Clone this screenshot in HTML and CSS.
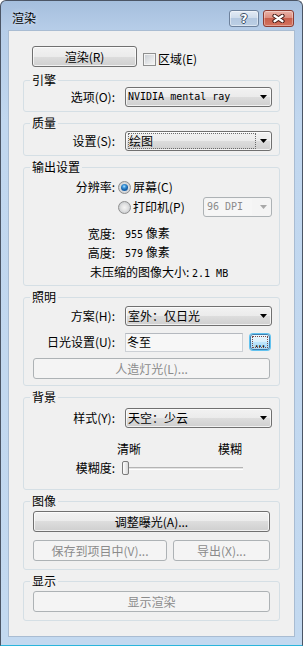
FILE: index.html
```html
<!DOCTYPE html>
<html lang="zh-CN">
<head>
<meta charset="utf-8">
<title>渲染</title>
<link rel="stylesheet" href="styles.css">
</head>
<body>
<div class="window">
  <div class="titlebar">
    <span class="title">渲染</span>
    <div class="caps">
      <span class="cap cap-help">?</span>
      <span class="cap cap-close"><svg width="13" height="9" viewBox="0 0 13 9"><path d="M2.5 1.8 L10.5 7.2 M10.5 1.8 L2.5 7.2" stroke="#3d1510" stroke-width="4.2" stroke-linecap="round"/><path d="M2.5 1.8 L10.5 7.2 M10.5 1.8 L2.5 7.2" stroke="#fff" stroke-width="2.4" stroke-linecap="round"/></svg></span>
    </div>
  </div>
  <div class="client">
    <div class="render-row">
      <span class="btn btn-render">渲染(R)</span>
      <span class="checkbox"></span>
      <span class="check-label">区域(E)</span>
    </div>

    <fieldset class="group g-engine">
      <legend>引擎</legend>
      <div class="row">
        <span class="lbl">选项(O):</span>
        <span class="combo"><span class="mono">NVIDIA mental ray</span><svg class="arrow" width="7" height="4" viewBox="0 0 7 4"><path d="M0 0H7L3.5 4Z" fill="#000"/></svg></span>
      </div>
    </fieldset>

    <fieldset class="group g-quality">
      <legend>质量</legend>
      <div class="row">
        <span class="lbl">设置(S):</span>
        <span class="combo"><span class="focus-text">绘图</span><svg class="arrow" width="7" height="4" viewBox="0 0 7 4"><path d="M0 0H7L3.5 4Z" fill="#000"/></svg></span>
      </div>
    </fieldset>

    <fieldset class="group g-output">
      <legend>输出设置</legend>
      <div class="row">
        <span class="lbl">分辨率:</span>
        <span class="radio-cell"><span class="radio checked"></span><span>屏幕(C)</span></span>
      </div>
      <div class="row">
        <span></span>
        <span class="radio-cell"><span class="radio"></span><span>打印机(P)</span>
          <span class="combo combo-disabled dpi"><span class="dpi-text mono">96 DPI</span><svg class="arrow" width="7" height="4" viewBox="0 0 7 4"><path d="M0 0H7L3.5 4Z" fill="#a8a8a8"/></svg></span>
        </span>
      </div>
      <div class="row info first-info">
        <span class="lbl">宽度:</span>
        <span><span class="mono">955</span> 像素</span>
      </div>
      <div class="row info">
        <span class="lbl">高度:</span>
        <span><span class="mono">579</span> 像素</span>
      </div>
      <div class="uncompressed">未压缩的图像大小: <span class="mono">2.1 MB</span></div>
    </fieldset>

    <fieldset class="group g-light">
      <legend>照明</legend>
      <div class="row">
        <span class="lbl">方案(H):</span>
        <span class="combo"><span>室外：仅日光</span><svg class="arrow" width="7" height="4" viewBox="0 0 7 4"><path d="M0 0H7L3.5 4Z" fill="#000"/></svg></span>
      </div>
      <div class="row sun-row">
        <span class="lbl">日光设置(U):</span>
        <span class="sun-cell"><span class="textbox">冬至</span><span class="btn btn-dots"><span class="dots">...</span></span></span>
      </div>
      <span class="btn btn-wide btn-disabled btn-artificial">人造灯光(L)...</span>
    </fieldset>

    <fieldset class="group g-bg">
      <legend>背景</legend>
      <div class="row">
        <span class="lbl">样式(Y):</span>
        <span class="combo"><span>天空：少云</span><svg class="arrow" width="7" height="4" viewBox="0 0 7 4"><path d="M0 0H7L3.5 4Z" fill="#000"/></svg></span>
      </div>
      <div class="row scale-row">
        <span></span>
        <span class="scale"><span>清晰</span><span>模糊</span></span>
      </div>
      <div class="row slider-row">
        <span class="lbl">模糊度:</span>
        <span class="slider"><span class="track"></span><span class="thumb"></span></span>
      </div>
    </fieldset>

    <fieldset class="group g-image">
      <legend>图像</legend>
      <span class="btn btn-wide">调整曝光(A)...</span>
      <div class="btn-pair">
        <span class="btn btn-disabled btn-save">保存到项目中(V)...</span>
        <span class="btn btn-disabled btn-export">导出(X)...</span>
      </div>
    </fieldset>

    <fieldset class="group g-display">
      <legend>显示</legend>
      <span class="btn btn-wide btn-disabled">显示渲染</span>
    </fieldset>
  </div>
</div>
</body>
</html>
```

FILE: styles.css
```css
* {
  box-sizing: border-box;
}

body {
  margin: 0;
  background: #ffffff;
}

.window {
  width: 303px;
  height: 646px;
  border: 1px solid #4b5565;
  border-bottom: 1px solid #2ab5dc;
  border-radius: 6px 6px 0 0;
  background: linear-gradient(#a5bfdd 0px, #b6cde8 28px, #c1d7ef 120px, #c3d9f0 100%);
  display: flex;
  flex-direction: column;
  font-family: "Noto Sans CJK SC", sans-serif;
  font-size: 12px;
  line-height: 14px;
  color: #000000;
}

.titlebar {
  height: 29px;
  flex: none;
  display: flex;
  align-items: flex-start;
  padding: 9px 8px 0 11px;
}

.title {
  margin-top: 1px;
  text-shadow: 0 0 5px rgba(255, 255, 255, 0.8);
}

.caps {
  margin-left: auto;
  display: flex;
  gap: 4px;
}

.cap {
  width: 30px;
  height: 17px;
  border-radius: 3px;
  display: flex;
  align-items: center;
  justify-content: center;
}

.cap-help {
  border: 1px solid #6d819c;
  background: linear-gradient(#e3ebf5 0%, #cfdcec 45%, #b4c8e0 50%, #bccfe5 100%);
  box-shadow: inset 0 0 0 1px rgba(255, 255, 255, 0.45);
  color: #ffffff;
  font-family: "DejaVu Sans", sans-serif;
  font-weight: bold;
  font-size: 12px;
  line-height: 14px;
  text-shadow: 1px 0 0 #3b4d66, -1px 0 0 #3b4d66, 0 1px 0 #3b4d66, 0 -1px 0 #3b4d66;
}

.cap-close {
  width: 31px;
  border: 1px solid #8c3b31;
  background: linear-gradient(#eab3a8 0%, #dd8e7f 45%, #c85f4c 50%, #d4735e 100%);
  box-shadow: inset 0 0 0 1px rgba(255, 255, 255, 0.35);
}

.client {
  flex: 1;
  margin: 0 7px 8px;
  background: #f0f0f0;
  border: 1px solid #a9bcd2;
  padding: 15px 14px 0;
}

.render-row {
  display: flex;
  align-items: flex-start;
  padding-left: 9px;
}

.btn {
  display: flex;
  align-items: center;
  justify-content: center;
  height: 21px;
  border: 1px solid #707070;
  border-radius: 3px;
  background: linear-gradient(#f2f2f2 0%, #ebebeb 50%, #dddddd 50%, #cfcfcf 100%);
  box-shadow: inset 0 0 0 1px rgba(255, 255, 255, 0.7);
  white-space: nowrap;
}

.btn-render {
  width: 105px;
}

.checkbox {
  width: 13px;
  height: 13px;
  margin: 7px 0 0 6px;
  border: 1px solid #8e8f8f;
  background: linear-gradient(135deg, #c6cbd1 0%, #e6e8ea 60%, #f6f6f6 100%);
  box-shadow: inset 0 0 0 1px #f4f4f4;
}

.check-label {
  margin: 6px 0 0 2px;
}

.group {
  margin: 6px 0 0;
  padding: 0 7px 4px 9px;
  border: 1px solid #d5dfe5;
  border-radius: 3px;
  min-width: 0;
}

.group + .group {
  margin-top: 4px;
}

.group legend {
  padding: 0 2px;
  margin-left: -3px;
  line-height: 14px;
}

.row {
  display: grid;
  grid-template-columns: 82px 147px;
  column-gap: 10px;
  align-items: center;
}

.lbl {
  text-align: right;
  white-space: nowrap;
}

.mono {
  font-family: "DejaVu Sans Mono", monospace;
  font-size: 10px;
}

.combo {
  display: flex;
  align-items: center;
  height: 20px;
  border: 1px solid #707070;
  border-radius: 3px;
  background: linear-gradient(#f2f2f2 0%, #ebebeb 50%, #dddddd 50%, #cfcfcf 100%);
  box-shadow: inset 0 0 0 1px rgba(255, 255, 255, 0.7);
  padding: 0 4px 0 2px;
  white-space: nowrap;
}

.combo .arrow {
  margin-left: auto;
  flex: none;
}

.focus-text {
  flex: 1;
  height: 16px;
  margin-right: 4px;
  border: 1px dotted #6b6b6b;
  display: flex;
  align-items: center;
}

.combo-disabled {
  border-color: #adb2b5;
  background: #f4f4f4;
  box-shadow: none;
  color: #8b8b8b;
}

.g-engine {
  padding-top: 0;
}

.g-quality {
  padding-top: 1px;
}

.g-output {
  padding-top: 3px;
}

.radio-cell {
  display: flex;
  align-items: center;
  height: 20px;
  margin-left: -7px;
  white-space: nowrap;
}

.radio {
  width: 13px;
  height: 13px;
  margin-right: 2px;
  border-radius: 50%;
  border: 1px solid #8f8f8f;
  background: radial-gradient(circle at 50% 50%, #f4f4f4 0, #e4e4e4 3px, #c9ccd0 6px);
  display: flex;
  align-items: center;
  justify-content: center;
  flex: none;
}

.radio.checked::after {
  content: "";
  width: 7px;
  height: 7px;
  border-radius: 50%;
  background: radial-gradient(circle at 45% 35%, #b9e4fb 0, #3e97db 1.6px, #175fa6 3.5px);
}

.dpi {
  margin-left: auto;
  width: 69px;
  height: 20px;
  padding-left: 2px;
}

.dpi-text {
  width: 46px;
  height: 16px;
  display: flex;
  align-items: center;
  padding-left: 1px;
  background: #f6f6f6;
}

.info {
  height: 19px;
}

.first-info {
  margin-top: 7px;
}

.uncompressed {
  height: 19px;
  line-height: 19px;
  padding-left: 57px;
  white-space: nowrap;
}

.g-light {
  padding-top: 2px;
  padding-bottom: 6px;
}

.sun-row {
  height: 20px;
  margin-top: 6px;
}

.sun-cell {
  display: flex;
  align-items: center;
  gap: 7px;
  margin-right: 2px;
}

.textbox {
  flex: 1;
  height: 19px;
  display: flex;
  align-items: center;
  padding-left: 1px;
  border: 1px solid #ccd0d5;
  border-top-color: #b5b9bf;
  background: #f7f7f7;
}

.btn-dots {
  width: 20px;
  height: 16px;
  border-color: #3c7fb1;
  background: linear-gradient(#eaf6fd 0%, #d9f0fc 50%, #bee6fd 50%, #a7d9f5 100%);
  box-shadow: 0 0 0 1px #62c2ef;
  align-items: flex-end;
  padding: 1px;
}

.dots {
  width: 100%;
  height: 12px;
  border: 1px dotted #7a4a4a;
  display: flex;
  justify-content: center;
  align-items: flex-end;
  line-height: 10px;
}

.btn-wide {
  width: 237px;
}

.btn-disabled {
  border-color: #adb2b5;
  background: #f4f4f4;
  box-shadow: none;
  color: #8b8b8b;
}

.btn-artificial {
  margin-top: 6px;
}

.g-bg {
  padding-top: 4px;
  padding-bottom: 13px;
}

.scale-row {
  height: 14px;
  margin-top: 14px;
}

.scale {
  display: flex;
  justify-content: space-between;
  margin-left: -8px;
  width: 125px;
}

.slider-row {
  height: 16px;
  margin-top: 4px;
}

.slider {
  position: relative;
  display: flex;
  align-items: center;
  margin-left: -3px;
  width: 121px;
  height: 16px;
}

.track {
  width: 100%;
  height: 3px;
  border-top: 1px solid #b4b4b4;
  border-bottom: 1px solid #ffffff;
  background: #e3e3e3;
}

.thumb {
  position: absolute;
  left: 0;
  top: 1px;
  width: 7px;
  height: 14px;
  border: 1px solid #7b7b7b;
  border-radius: 2px;
  background: linear-gradient(90deg, #fdfdfd 0%, #e8e8e8 60%, #d6d6d6 100%);
}

.g-image {
  padding-top: 3px;
  padding-bottom: 8px;
}

.btn-pair {
  display: flex;
  gap: 6px;
  margin-top: 8px;
}

.btn-save {
  width: 134px;
}

.btn-export {
  width: 97px;
}

.g-display {
  padding-top: 3px;
  padding-bottom: 8px;
}
```
